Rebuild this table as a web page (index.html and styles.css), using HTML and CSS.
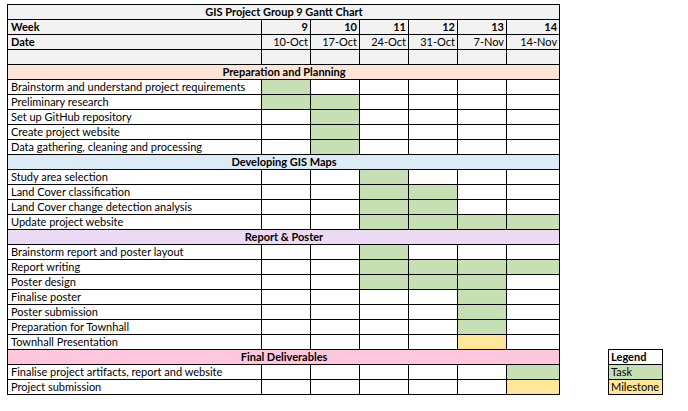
FILE: index.html
```html
<!DOCTYPE html>
<html>
<head>
<meta charset="utf-8">
<link rel="stylesheet" href="styles.css">
</head>
<body>
<div class="sheet">
<table class="gantt">
<colgroup>
<col class="c-task"><col class="c-wk"><col class="c-wk"><col class="c-wk"><col class="c-wk"><col class="c-wk"><col class="c-last">
</colgroup>
<tr class="gray"><td colspan="7" class="center b">GIS Project Group 9 Gantt Chart</td></tr>
<tr class="gray b"><td>Week</td><td class="r">9</td><td class="r">10</td><td class="r">11</td><td class="r">12</td><td class="r">13</td><td class="r">14</td></tr>
<tr class="gray"><td class="b">Date</td><td class="r">10-Oct</td><td class="r">17-Oct</td><td class="r">24-Oct</td><td class="r">31-Oct</td><td class="r">7-Nov</td><td class="r">14-Nov</td></tr>
<tr class="gray"><td></td><td></td><td></td><td></td><td></td><td></td><td></td></tr>
<tr class="sec peach"><td colspan="7">Preparation and Planning</td></tr>
<tr><td>Brainstorm and understand project requirements</td><td class="g"></td><td></td><td></td><td></td><td></td><td></td></tr>
<tr><td>Preliminary research</td><td class="g"></td><td class="g"></td><td></td><td></td><td></td><td></td></tr>
<tr><td>Set up GitHub repository</td><td></td><td class="g"></td><td></td><td></td><td></td><td></td></tr>
<tr><td>Create project website</td><td></td><td class="g"></td><td></td><td></td><td></td><td></td></tr>
<tr><td>Data gathering, cleaning and processing</td><td></td><td class="g"></td><td></td><td></td><td></td><td></td></tr>
<tr class="sec blue"><td colspan="7">Developing GIS Maps</td></tr>
<tr><td>Study area selection</td><td></td><td></td><td class="g"></td><td></td><td></td><td></td></tr>
<tr><td>Land Cover classification</td><td></td><td></td><td class="g"></td><td class="g"></td><td></td><td></td></tr>
<tr><td>Land Cover change detection analysis</td><td></td><td></td><td class="g"></td><td class="g"></td><td></td><td></td></tr>
<tr><td>Update project website</td><td></td><td></td><td class="g"></td><td class="g"></td><td class="g"></td><td class="g"></td></tr>
<tr class="sec lav"><td colspan="7">Report &amp; Poster</td></tr>
<tr><td>Brainstorm report and poster layout</td><td></td><td></td><td class="g"></td><td></td><td></td><td></td></tr>
<tr><td>Report writing</td><td></td><td></td><td class="g"></td><td class="g"></td><td class="g"></td><td class="g"></td></tr>
<tr><td>Poster design</td><td></td><td></td><td class="g"></td><td class="g"></td><td class="g"></td><td></td></tr>
<tr><td>Finalise poster</td><td></td><td></td><td></td><td></td><td class="g"></td><td></td></tr>
<tr><td>Poster submission</td><td></td><td></td><td></td><td></td><td class="g"></td><td></td></tr>
<tr><td>Preparation for Townhall</td><td></td><td></td><td></td><td></td><td class="g"></td><td></td></tr>
<tr><td>Townhall Presentation</td><td></td><td></td><td></td><td></td><td class="y"></td><td></td></tr>
<tr class="sec pink"><td colspan="7">Final Deliverables</td></tr>
<tr><td>Finalise project artifacts, report and website</td><td></td><td></td><td></td><td></td><td></td><td class="g"></td></tr>
<tr><td>Project submission</td><td></td><td></td><td></td><td></td><td></td><td class="y"></td></tr>
</table>
<table class="legend">
<tr><td class="b">Legend</td></tr>
<tr><td class="g">Task</td></tr>
<tr><td class="y">Milestone</td></tr>
</table>
</div>
</body>
</html>
```
FILE: styles.css
```css
html, body {
  margin: 0;
  padding: 0;
  background: #ffffff;
}
body {
  font-family: Lato, "Liberation Sans", sans-serif;
  font-size: 11px;
  color: #000;
}
.sheet {
  display: flex;
  align-items: flex-end;
  gap: 48px;
  padding: 4px 0 0 7px;
}
table {
  border-collapse: collapse;
  table-layout: fixed;
}
td {
  border: 1px solid #000;
  height: 14px;
  padding: 0 2px 0 3px;
  line-height: 14px;
  white-space: nowrap;
  overflow: hidden;
  vertical-align: bottom;
}
.gantt { width: 553px; }
.c-task { width: 254px; }
.c-wk { width: 49px; }
.c-last { width: 53px; }
.gray td { background: #f2f2f2; }
.b { font-weight: bold; }
.r { text-align: right; }
.center { text-align: center; }
.sec td { text-align: center; font-weight: bold; }
.peach td { background: #fce4d6; }
.blue td { background: #ddebf7; }
.lav td { background: #ecdaf5; }
.pink td { background: #ffc7dd; }
td.g { background: #c6e0b4; }
td.y { background: #ffe699; }
.legend { width: 55px; }
.legend td { padding: 0 2px; }
```
